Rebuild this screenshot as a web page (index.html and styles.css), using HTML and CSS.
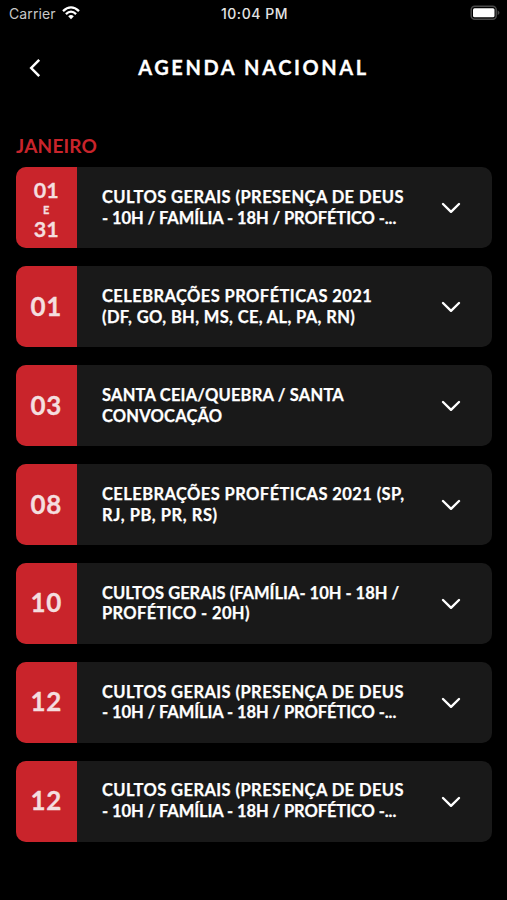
FILE: index.html
```
<!DOCTYPE html>
<html lang="pt-BR">
<head>
<meta charset="utf-8">
<title>Agenda Nacional</title>
<link rel="stylesheet" href="styles.css">
</head>
<body>
<header class="status">
  <div class="carrier"><span class="carrier-name">Carrier</span>
    <svg class="wifi" viewBox="0 0 18 14" width="18" height="14"><path d="M1 5.2Q9-2.4 17 5.2M3.9 8.1Q9 3.2 14.1 8.1" fill="none" stroke="#fff" stroke-width="2.3"/><path d="M6.2 10.3Q9 7.8 11.8 10.3L9 13.2Z" fill="#fff"/></svg>
  </div>
  <span class="clock">10:04 PM</span>
  <svg class="battery" viewBox="0 0 31 16" width="31" height="16"><rect x="1.2" y="1.2" width="25" height="13" rx="3.5" fill="none" stroke="#4a4a4a" stroke-width="1.5"/><rect x="3" y="3.2" width="21.5" height="9" rx="1.5" fill="#fff"/><path d="M27.6 5.2Q31.4 7.7 27.6 10.2Z" fill="#4a4a4a"/></svg>
</header>
<nav class="nav">
  <svg class="back" viewBox="0 0 12 20" width="12" height="20"><path d="M10.2 1.8L2.2 10L10.2 18.2" fill="none" stroke="#fff" stroke-width="2.5"/></svg>
  <h1 class="title">AGENDA NACIONAL</h1>
</nav>
<main class="agenda">
  <h2 class="month">JANEIRO</h2>
  <article class="card"><div class="date range"><span>01</span><small>E</small><span>31</span></div><p class="text"><span class="line wide">CULTOS GERAIS (PRESENÇA DE DEUS</span><span class="line tight">- 10H / FAMÍLIA - 18H / PROFÉTICO -...</span></p><svg class="chevron" viewBox="0 0 20 12" width="20" height="12"><path d="M2 2L10 9.8L18 2"/></svg></article>
  <article class="card"><div class="date">01</div><p class="text"><span class="line wide">CELEBRAÇÕES PROFÉTICAS 2021</span><span class="line mid">(DF, GO, BH, MS, CE, AL, PA, RN)</span></p><svg class="chevron" viewBox="0 0 20 12" width="20" height="12"><path d="M2 2L10 9.8L18 2"/></svg></article>
  <article class="card"><div class="date">03</div><p class="text"><span class="line snug">SANTA CEIA/QUEBRA / SANTA</span><span class="line snug">CONVOCAÇÃO</span></p><svg class="chevron" viewBox="0 0 20 12" width="20" height="12"><path d="M2 2L10 9.8L18 2"/></svg></article>
  <article class="card"><div class="date">08</div><p class="text"><span class="line wide">CELEBRAÇÕES PROFÉTICAS 2021 (SP,</span><span class="line loose">RJ, PB, PR, RS)</span></p><svg class="chevron" viewBox="0 0 20 12" width="20" height="12"><path d="M2 2L10 9.8L18 2"/></svg></article>
  <article class="card"><div class="date">10</div><p class="text"><span class="line">CULTOS GERAIS (FAMÍLIA- 10H - 18H /</span><span class="line mid">PROFÉTICO - 20H)</span></p><svg class="chevron" viewBox="0 0 20 12" width="20" height="12"><path d="M2 2L10 9.8L18 2"/></svg></article>
  <article class="card"><div class="date">12</div><p class="text"><span class="line wide">CULTOS GERAIS (PRESENÇA DE DEUS</span><span class="line tight">- 10H / FAMÍLIA - 18H / PROFÉTICO -...</span></p><svg class="chevron" viewBox="0 0 20 12" width="20" height="12"><path d="M2 2L10 9.8L18 2"/></svg></article>
  <article class="card"><div class="date">12</div><p class="text"><span class="line wide">CULTOS GERAIS (PRESENÇA DE DEUS</span><span class="line tight">- 10H / FAMÍLIA - 18H / PROFÉTICO -...</span></p><svg class="chevron" viewBox="0 0 20 12" width="20" height="12"><path d="M2 2L10 9.8L18 2"/></svg></article>
</main>
</body>
</html>
```
FILE: styles.css
```
* { box-sizing: border-box; margin: 0; padding: 0; }
body { background: #000; color: #fff; font-family: Lato, "Liberation Sans", sans-serif; }
.status { height: 28px; display: grid; grid-template-columns: 1fr auto 1fr; align-items: center; padding: 0 6px 2px 9px; font-family: Inter, sans-serif; font-size: 14px; }
.carrier { display: flex; align-items: center; gap: 6px; color: #c8c8c8; }
.carrier-name { letter-spacing: 0.1px; }
.clock { margin-left: -1px; font-weight: 500; color: #e4e4e4; letter-spacing: 0.55px; }
.battery { justify-self: end; }
.nav { height: 80px; display: grid; grid-template-columns: 60px 1fr 60px; align-items: center; }
.back { margin-left: 28.7px; }
.title { margin-top: -2px; font-size: 20px; font-weight: 700; letter-spacing: 2.6px; text-align: center; -webkit-text-stroke: 0.3px #fff; }
.agenda { padding: 26.4px 15.5px 0 16px; display: flex; flex-direction: column; gap: 18px; }
.month { font-size: 19px; line-height: 24px; font-weight: 700; letter-spacing: 0.2px; color: #c9242b; margin-bottom: -9px; }
.card { height: 80.9px; display: flex; align-items: center; background: #191919; border-radius: 10px; overflow: hidden; }
.date { width: 60.5px; height: 100%; flex: none; display: flex; align-items: center; justify-content: center; padding-bottom: 2px; background: #c9242b; color: #f4dedf; font-size: 26px; font-weight: 700; letter-spacing: 0.6px; -webkit-text-stroke: 0.3px #f4dedf; }
.range { flex-direction: column; padding: 3px 0 0; font-size: 21.5px; line-height: 26px; letter-spacing: 0; }
.range small { font-size: 11px; line-height: 13px; }
.text { flex: 1; padding: 0 0 0 25.5px; font-size: 16.5px; line-height: 20.7px; font-weight: 700; white-space: nowrap; -webkit-text-stroke: 0.25px #fff; }
.line { display: block; }
.wide { letter-spacing: 0.42px; }
.mid { letter-spacing: 0.35px; }
.snug { letter-spacing: 0.19px; }
.loose { letter-spacing: 0.55px; }
.tight { letter-spacing: -0.09px; }
.chevron { flex: none; margin: 1px 31px 0 0; fill: none; stroke: #fff; stroke-width: 2.4; stroke-linecap: round; stroke-linejoin: round; }
```
